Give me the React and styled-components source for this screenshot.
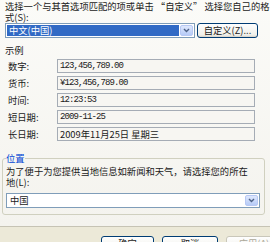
import { Fragment } from "react";
import styled, { createGlobalStyle } from "styled-components";

const Global = createGlobalStyle`
  html, body { margin: 0; padding: 0; }
  body {
    background: #ece9d8;
    font-family: "Noto Sans CJK SC", "Liberation Sans", sans-serif;
  }
`;

const Dialog = styled.div`
  width: 270px;
  height: 242px;
  overflow: hidden;
  background: #ece9d8;
  display: flex;
  flex-direction: column;
`;

const TabPane = styled.div`
  flex-shrink: 0;
  height: 227px;
  box-sizing: border-box;
  background: linear-gradient(#fbfbf8, #f4f3ee);
  border-bottom: 1px solid #c6c3b4;
  padding: 1px 10px 0 5px;
  display: flex;
  flex-direction: column;
  font-size: 9.3px;
  color: #1a1a1a;
`;

const Intro = styled.div`
  line-height: 11px;
  white-space: nowrap;
`;

const SelectRow = styled.div`
  display: flex;
  gap: 2px;
  margin-top: 0;
  margin-right: 2px;
  height: 15px;
`;

const Select = styled.div`
  flex: 1;
  display: flex;
  box-sizing: border-box;
  border: 1px solid #7f9db9;
  background: #fff;
  padding: 1px;
`;

const SelectValue = styled.div`
  flex: 1;
  display: flex;
  align-items: center;
  padding-left: 2px;
  line-height: 1;
  background: ${(p) => (p.$selected ? "#316ac5" : "transparent")};
  color: ${(p) => (p.$selected ? "#fff" : "#1a1a1a")};
`;

const DropButton = styled.div`
  width: 13px;
  margin-left: 1px;
  box-sizing: border-box;
  border: 1px solid #b7c8f4;
  border-radius: 2px;
  background: linear-gradient(#dfe8fd, #b6cbf7);
  display: flex;
  align-items: center;
  justify-content: center;
`;

const PushButton = styled.div`
  flex-shrink: 0;
  width: ${(p) => p.$w}px;
  height: ${(p) => p.$h || 15}px;
  box-sizing: border-box;
  border: 1px solid ${(p) => (p.$disabled ? "#c9c7ba" : "#003c74")};
  border-radius: 3px;
  background: linear-gradient(#fefefe, #f0f0ea 85%, #d6d0c5);
  color: ${(p) => (p.$disabled ? "#aca899" : "#1a1a1a")};
  display: flex;
  align-items: flex-start;
  justify-content: center;
  padding-top: 2px;
  line-height: 1;
  font-size: 9.3px;
  white-space: nowrap;
`;

const SectionLabel = styled.div`
  margin-top: 7px;
  line-height: 11px;
`;

const Fields = styled.div`
  display: grid;
  grid-template-columns: 52px 198px;
  row-gap: 3px;
  margin-top: 3px;
`;

const FieldLabel = styled.div`
  display: flex;
  align-items: center;
  padding-left: 3px;
`;

const Field = styled.div`
  height: 14px;
  box-sizing: border-box;
  border: 1px solid #a5acb5;
  background: #f7f6f2;
  display: flex;
  align-items: center;
  padding-left: 2px;
  font-family: ${(p) =>
    p.$cjk
      ? '"Noto Sans CJK SC", sans-serif'
      : '"Liberation Mono", "Noto Sans CJK SC", monospace'};
  font-size: ${(p) => (p.$cjk ? "9.3px" : "9px")};
  letter-spacing: ${(p) => (p.$cjk ? "0" : "-0.9px")};
  white-space: nowrap;
  overflow: hidden;
`;

const GroupBox = styled.fieldset`
  margin: 12px -5px 0 -3px;
  padding: 0 4px 6px 3px;
  border: 1px solid #d0d0bf;
  border-radius: 3px;
  display: flex;
  flex-direction: column;
`;

const Legend = styled.legend`
  color: #0046d5;
  padding: 0;
  margin-left: 0;
  line-height: 11px;
`;

const GroupText = styled.div`
  line-height: 11px;
  white-space: nowrap;
  margin-top: 2px;
`;

const LocationSelect = styled(Select)`
  flex: none;
  height: 15px;
  margin-top: 5px;
`;

const Footer = styled.div`
  display: flex;
  justify-content: flex-end;
  gap: 8px;
  padding-top: 9px;
  margin-right: -12px;
`;

function Chevron() {
  return (
    <svg width="7" height="5" viewBox="0 0 7 5">
      <path d="M1 1 L3.5 3.5 L6 1" fill="none" stroke="#4d6185" strokeWidth="1.4" />
    </svg>
  );
}

const samples = [
  ["数字:", "123,456,789.00"],
  ["货币:", "¥123,456,789.00"],
  ["时间:", "12:23:53"],
  ["短日期:", "2009-11-25"],
  ["长日期:", "2009年11月25日 星期三", true],
];

export default function App() {
  return (
    <Dialog>
      <Global />
      <TabPane>
        <Intro>
          选择一个与其首选项匹配的项或单击 “自定义” 选择您自己的格
          <br />
          式(S):
        </Intro>
        <SelectRow>
          <Select>
            <SelectValue $selected>中文(中国)</SelectValue>
            <DropButton>
              <Chevron />
            </DropButton>
          </Select>
          <PushButton $w={61}>自定义(Z)...</PushButton>
        </SelectRow>

        <SectionLabel>示例</SectionLabel>
        <Fields>
          {samples.map(([label, value, cjk]) => (
            <Fragment key={label}>
              <FieldLabel>{label}</FieldLabel>
              <Field $cjk={cjk}>{value}</Field>
            </Fragment>
          ))}
        </Fields>

        <GroupBox>
          <Legend>位置</Legend>
          <GroupText>
            为了便于为您提供当地信息如新闻和天气，请选择您的所在
            <br />
            地(L):
          </GroupText>
          <LocationSelect>
            <SelectValue>中国</SelectValue>
            <DropButton>
              <Chevron />
            </DropButton>
          </LocationSelect>
        </GroupBox>
      </TabPane>
      <Footer>
        <PushButton $w={53} $h={18}>确定</PushButton>
        <PushButton $w={56} $h={18}>取消</PushButton>
        <PushButton $w={56} $h={18} $disabled>
          应用(A)
        </PushButton>
      </Footer>
    </Dialog>
  );
}
